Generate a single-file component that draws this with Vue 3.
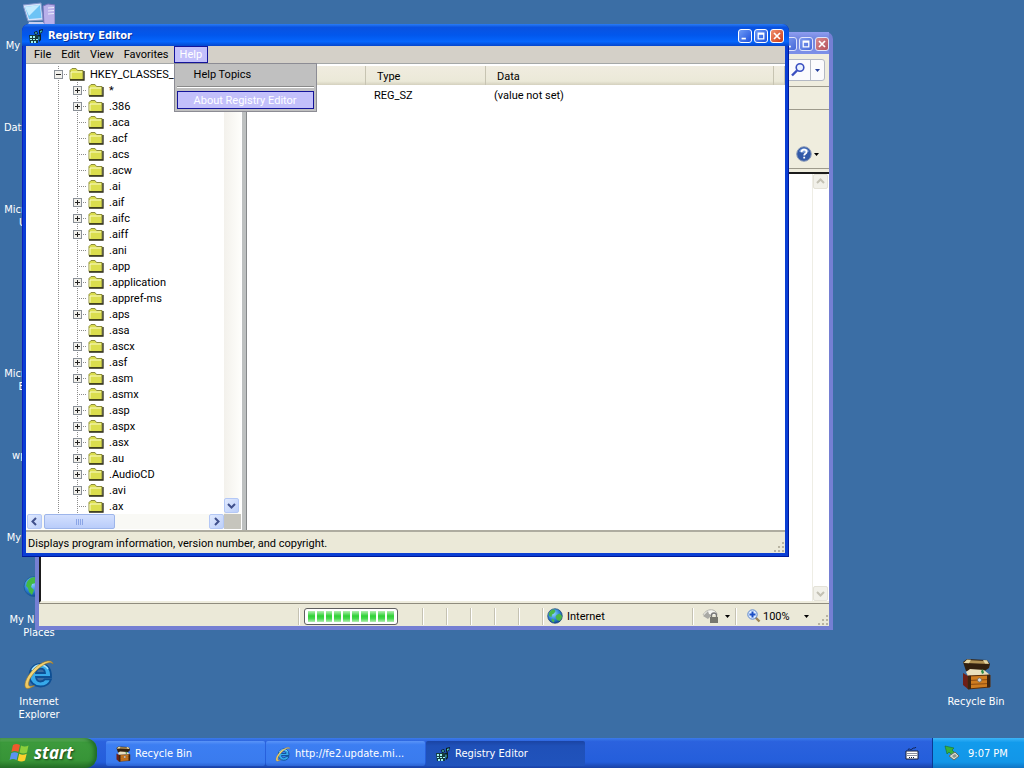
<template>
  <div class="screen">
    <svg class="sprite" aria-hidden="true">
      <defs>
        <linearGradient id="gold" x1="0" y1="0" x2="1" y2="1">
          <stop offset="0" stop-color="#fff3a8" />
          <stop offset="1" stop-color="#d99a1c" />
        </linearGradient>
        <radialGradient id="sea" cx="0.4" cy="0.35" r="0.7">
          <stop offset="0" stop-color="#8fd4ff" />
          <stop offset="0.6" stop-color="#2a7fd4" />
          <stop offset="1" stop-color="#0b3f86" />
        </radialGradient>
      </defs>
      <symbol id="i-folder" viewBox="0 0 16 16">
        <path d="M1 4.500L3 2.500h4l1.500 2H14v9H1z" fill="#dbde4e" stroke="#8c8c3c" />
        <path d="M2 12.500V6h11" fill="none" stroke="#fbfbc8" />
        <path d="M1 14h14V5" fill="none" stroke="#2a2a14" stroke-width="1.300" />
      </symbol>
      <symbol id="i-ie" viewBox="0 0 32 32">
        <path d="M28 19H13c.3 3 2 4.500 4.500 4.500 2 0 3.500-.8 4.300-2.200H28C26.500 26 22.500 28.500 17.500 28.500 11 28.500 6.500 24 6.500 17.500S11 6 17.500 6 28.300 10.500 28 19zM13 15h9c-.2-2.800-1.800-4.300-4.400-4.300S13.300 12.200 13 15z" fill="#37a9ea" stroke="#0e4f94" stroke-width="1.800" />
        <path d="M9 12c2-3.500 5-5 8.500-5 3 0 6 1.500 7.500 4" fill="none" stroke="#a5e4ff" stroke-width="1.600" />
        <path d="M30 6C29 .5 20 3 12.500 9.500 4 17 .5 26 2.500 29.500c1.500 2 5.500.5 9-2-4 1.500-6 1-6-1.500 0-4 4-10 9-14.500C21 5.800 27.500 2.500 30 6z" fill="url(#gold)" stroke="#a8791a" stroke-width="0.600" />
      </symbol>
      <symbol id="i-globe" viewBox="0 0 16 16">
        <circle cx="8" cy="8" r="7.300" fill="url(#sea)" stroke="#1b4370" stroke-width="0.700" />
        <path d="M2 5c1-2 3-3.500 5-3.800L8.500 3 7 5.500 5 6.500 4.500 9 2 8zM9.500 7l3-1.500L15 8c0 2-1 4-2.500 5L10 12 8.500 9zM5 10.500L7.500 12 7 14.500 4.500 13z" fill="#4ab648" />
      </symbol>
      <symbol id="i-network" viewBox="0 0 32 32">
        <circle cx="11" cy="10.500" r="10" fill="url(#sea)" stroke="#1b5a90" stroke-width="0.700" />
        <path d="M4 6c2-3 4-4.500 8-5l3 3-2 3-4 1-1 3 3 3-2 5-3-3-1-4-2-2zM14 9l5-2 2 4-3 6-3-2z" fill="#43b944" />
        <path d="M15 14h13v11H15z" fill="#7cc8f4" stroke="#6f88b8" stroke-width="2" />
      </symbol>
      <symbol id="i-regedit" viewBox="0 0 16 16">
        <path d="M1 7h9v8H2z" fill="#163b3d" />
        <path d="M2 8h2v2H2zM5 8h2v2H5zM2 11h2v1H2zM5 11h2v1H5zM8 11h2v1H8zM3 13h2v2H3zM6 13h2v2H6z" fill="#9ff0ee" />
        <path d="M6 4l3-1 1 3-3 1zM11 2l4-1-1 4-3 1zM10 7l3-1v6l-2 2z" fill="#0b1c20" />
        <path d="M7 4.500l1.500-.5.5 1.500L7.500 6zM12 3l2-.8-.4 2-1.600.6z" fill="#4cc7c5" />
        <path d="M10.500 8.500h1v3h-1z" fill="#4cc7c5" />
      </symbol>
      <symbol id="i-chest" viewBox="0 0 32 32">
        <path d="M3 4l4-3 20 1 3 4-1 4-6 4-17-1z" fill="#32200f" />
        <path d="M3 5l4-3 19 1 3 3-23-1z" fill="#b09155" />
        <path d="M7 1.500l4 .2-2 3.500-5-.2zM23 2l4 .3 2 3.500-4-.2z" fill="#e5d7a6" />
        <path d="M6 14l4-3 14 1 6 5-22 1z" fill="#eadfbd" />
        <path d="M21 13l2-2 1 4-2 1z" fill="#2f8b46" />
        <path d="M3 15l5 3v13l-5-4z" fill="#6e1f18" />
        <path d="M8 18l22-1v12L8 31z" fill="#cf7c20" stroke="#5a2d0a" />
        <path d="M8 22.500l22-1M8 26.500l22-1" stroke="#8e4c12" fill="none" />
        <path d="M8 18l3-.2V31l-3 .2zM27 17l3-.2V29l-3 .3z" fill="#3e2410" />
        <circle cx="19.500" cy="22" r="2" fill="#d9d9d9" stroke="#5b5b5b" stroke-width="0.600" />
      </symbol>
      <symbol id="i-computer" viewBox="0 0 32 32">
        <path d="M0 3l18-2 2 17-15 1z" fill="#d5e4fb" stroke="#7e93c9" />
        <path d="M2 5l15-2 1.500 13L6 17z" fill="#6cc3f5" />
        <path d="M2 5l15-2L6 14z" fill="#c4ecff" />
        <path d="M20 4l5-2 7 1v20l-7 2-4-2z" fill="#b9b0ea" stroke="#7672ba" />
        <path d="M25 6l6-.5M25 9l6-.5M25 12l6-.5" stroke="#ececff" />
        <path d="M6 20h14l3 5H4z" fill="#c9cff0" />
      </symbol>
      <symbol id="i-flag" viewBox="0 0 24 22">
        <path d="M5 3c2.500-1.500 4.500-1.300 7 0l-1.600 7c-2.500-1.200-4.700-1.300-7 0z" fill="#ee5a2c" />
        <path d="M13 3.500c2.500 1.300 5 1.200 7.500 0L19 10.500c-2.500 1.300-5 1.200-7.500 0z" fill="#8bcf3c" />
        <path d="M3.200 11.300c2.300-1.300 4.500-1.200 7 0L8.600 18c-2.500-1.200-4.700-1.300-7 0z" fill="#5a93f2" />
        <path d="M11.200 11.800c2.500 1.300 5 1.200 7.500 0L17 18.500c-2.500 1.300-5 1.200-7.400 0z" fill="#fbd02d" />
      </symbol>
      <symbol id="i-left" viewBox="0 0 9 9"><path d="M6 1L2.500 4.500 6 8" fill="none" stroke="currentColor" stroke-width="2" /></symbol>
      <symbol id="i-right" viewBox="0 0 9 9"><path d="M3 1l3.500 3.500L3 8" fill="none" stroke="currentColor" stroke-width="2" /></symbol>
      <symbol id="i-up" viewBox="0 0 9 9"><path d="M1 6l3.500-3.500L8 6" fill="none" stroke="currentColor" stroke-width="2" /></symbol>
      <symbol id="i-down" viewBox="0 0 9 9"><path d="M1 3l3.500 3.500L8 3" fill="none" stroke="currentColor" stroke-width="2" /></symbol>
      <symbol id="i-drop" viewBox="0 0 5 3"><path d="M0 0h5L2.500 3z" fill="currentColor" /></symbol>
      <symbol id="i-grip" viewBox="0 0 12 12">
        <path d="M9 1h2v2H9zM5 5h2v2H5zM9 5h2v2H9zM1 9h2v2H1zM5 9h2v2H5zM9 9h2v2H9z" fill="#b8b4a2" />
      </symbol>
      <symbol id="i-min" viewBox="0 0 14 14"><path d="M3 9h5v2H3z" fill="#fff" /></symbol>
      <symbol id="i-max" viewBox="0 0 14 14"><path d="M3 3h8v8H3zM4.500 5.500v4h5v-4z" fill="#fff" fill-rule="evenodd" /></symbol>
      <symbol id="i-close" viewBox="0 0 14 14"><path d="M3.500 3.500l7 7M10.500 3.500l-7 7" stroke="#fff" stroke-width="2" /></symbol>
    </svg>

    <main class="desktop">
      <ul class="shortcuts">
        <li v-for="s in shortcuts" :key="s.label" class="shortcut">
          <svg class="icon32"><use v-if="s.icon" :href="s.icon" /></svg>
          <span>{{ s.label }}</span>
        </li>
      </ul>
      <ul class="shortcuts right">
        <li class="shortcut">
          <svg class="icon32"><use href="#i-chest" /></svg>
          <span>Recycle Bin</span>
        </li>
      </ul>

      <section class="window browser" aria-label="Browser">
        <header class="titlebar">
          <button v-for="b in winButtons" :key="b" class="winbtn" :class="b" :aria-label="b">
            <svg><use :href="'#i-' + b" /></svg>
          </button>
        </header>
        <div class="address-row">
          <div class="search">
            <button aria-label="Search">
              <svg width="16" height="16" viewBox="0 0 16 16" fill="none">
                <circle cx="10" cy="5.500" r="3.800" fill="#eaf2ff" stroke="#3a4fc0" stroke-width="1.600" />
                <path d="M7 8.500L2 13.500" stroke="#3a4fc0" stroke-width="2.400" />
              </svg>
            </button>
            <button aria-label="Search options"><svg class="drop"><use href="#i-drop" /></svg></button>
          </div>
        </div>
        <div class="links-row"></div>
        <div class="tools-row">
          <button class="help" aria-label="Help">
            <svg width="16" height="16" viewBox="0 0 16 16">
              <circle cx="8" cy="8" r="7.300" fill="#3159a8" stroke="#8d9cb8" />
              <path d="M3 5.500a5.500 5.500 0 0 1 10 0c-3 1.500-7 1.500-10 0z" fill="#7ba0dc" />
              <path d="M5.500 6.300C5.500 4.500 6.600 3.700 8 3.700s2.600.8 2.600 2.200c0 1.700-2.400 1.700-2.400 3.600M8.200 10.800v1.700" fill="none" stroke="#fff" stroke-width="1.800" />
            </svg>
            <svg class="drop"><use href="#i-drop" /></svg>
          </button>
        </div>
        <div class="page">
          <div class="vscroll off">
            <button aria-label="Scroll up"><svg><use href="#i-up" /></svg></button>
            <button aria-label="Scroll down"><svg><use href="#i-down" /></svg></button>
          </div>
        </div>
        <footer class="status">
          <span class="cell fill"></span>
          <span class="cell loading">
            <span class="progress" role="progressbar" aria-label="Loading"><i v-for="n in 10" :key="n"></i></span>
          </span>
          <span v-for="n in 5" :key="n" class="cell slot"></span>
          <span class="cell zone"><svg class="icon16"><use href="#i-globe" /></svg>Internet</span>
          <button class="cell filter" aria-label="Protection">
            <svg width="18" height="16" viewBox="0 0 18 16">
              <path d="M1 7c2-4 6-6 10-5 3 1 4 3 4 5" fill="#f6f6f2" stroke="#b6b6ae" />
              <path d="M1 8l5-5 1 3 3 1-4 4z" fill="#a9a9a4" />
              <path d="M9.500 9V7.500a2.500 2.500 0 0 1 5 0V9" fill="none" stroke="#777" stroke-width="1.300" />
              <path d="M8 9h8v6H8z" fill="#77776f" />
            </svg>
            <svg class="drop"><use href="#i-drop" /></svg>
          </button>
          <button class="cell zoom">
            <svg width="14" height="14" viewBox="0 0 14 14">
              <path d="M8.500 8.500l4 4" stroke="#9c8457" stroke-width="2.400" />
              <circle cx="5.500" cy="5.500" r="4.700" fill="#dcebff" stroke="#5c86cc" />
              <path d="M5.500 2.500v6M2.500 5.500h6" stroke="#1c4fc4" stroke-width="2" />
            </svg>
            <span>100%</span>
            <svg class="drop"><use href="#i-drop" /></svg>
          </button>
          <svg class="grip"><use href="#i-grip" /></svg>
        </footer>
      </section>

      <section class="window registry" aria-label="Registry Editor">
        <header class="titlebar">
          <svg class="icon16"><use href="#i-regedit" /></svg>
          <h1>Registry Editor</h1>
          <button v-for="b in winButtons" :key="b" class="winbtn" :class="b" :aria-label="b">
            <svg><use :href="'#i-' + b" /></svg>
          </button>
        </header>
        <nav class="menubar">
          <button v-for="m in menus" :key="m">{{ m }}</button>
          <div class="menu">
            <button class="open">Help</button>
            <div class="popup">
              <button>Help Topics</button>
              <hr>
              <button class="active">About Registry Editor</button>
            </div>
          </div>
        </nav>
        <div class="panes">
          <div class="tree-pane">
            <div class="tree-body">
              <ul class="tree">
                <li>
                  <div class="node">
                    <span class="twig"><i class="box"></i></span>
                    <svg class="icon16"><use href="#i-folder" /></svg>
                    <span>HKEY_CLASSES_ROOT</span>
                  </div>
                  <ul class="branch">
                    <li v-for="k in keys" :key="k.name" class="node">
                      <span class="twig"><i v-if="k.more" class="box plus"></i></span>
                      <svg class="icon16"><use href="#i-folder" /></svg>
                      <span>{{ k.name }}</span>
                    </li>
                  </ul>
                </li>
              </ul>
              <div class="vscroll">
                <button aria-label="Scroll down"><svg><use href="#i-down" /></svg></button>
              </div>
            </div>
            <div class="hscroll">
              <button aria-label="Scroll left"><svg><use href="#i-left" /></svg></button>
              <span class="thumb"><i v-for="n in 4" :key="n"></i></span>
              <button class="end" aria-label="Scroll right"><svg><use href="#i-right" /></svg></button>
              <span class="corner"></span>
            </div>
          </div>
          <div class="values">
            <table>
              <thead>
                <tr><th class="c-name">Name</th><th class="c-type">Type</th><th>Data</th><th class="c-rest"></th></tr>
              </thead>
              <tbody>
                <tr><td>(Default)</td><td>REG_SZ</td><td>(value not set)</td><td></td></tr>
              </tbody>
            </table>
          </div>
        </div>
        <footer class="status">
          <span class="fill">Displays program information, version number, and copyright.</span>
          <svg class="grip"><use href="#i-grip" /></svg>
        </footer>
      </section>
    </main>

    <footer class="taskbar">
      <button class="start"><svg><use href="#i-flag" /></svg>start</button>
      <div class="tasks">
        <button v-for="t in tasks" :key="t.title" :class="{ pressed: t.active }">
          <svg class="icon16"><use :href="t.icon" /></svg>
          <span>{{ t.title }}</span>
        </button>
      </div>
      <svg class="keyboard" width="14" height="14" viewBox="0 0 14 14">
        <path d="M3 4c1-3 2 1 4-1s3 0 4-2" fill="none" stroke="#10204c" />
        <path d="M1 5h12v8H1z" fill="#fff" stroke="#16203e" />
        <path d="M2.500 7.500h9M2.500 9.500h9M4 11.500h6" stroke="#16203e" stroke-dasharray="1 1" />
      </svg>
      <div class="tray">
        <svg width="16" height="16" viewBox="0 0 16 16">
          <path d="M1 1l9 2-2 2 3 3-3 2-3-3-2 2z" fill="#37b13c" stroke="#1c6f2c" stroke-width="0.600" />
          <path d="M5 11l6-4 4 4-5 4z" fill="#d6dccf" stroke="#5f6b62" />
          <path d="M8 11l3-2 2 2-3 2z" fill="#8a948c" />
        </svg>
        <time>9:07 PM</time>
      </div>
    </footer>
  </div>
</template>

<script setup>
const winButtons = ['min', 'max', 'close']
const menus = ['File', 'Edit', 'View', 'Favorites']

const shortcuts = [
  { label: 'My Computer', icon: '#i-computer' },
  { label: 'Data Manager' },
  { label: 'Microsoft Web Updater' },
  { label: '' },
  { label: 'Microsoft Web Explorer' },
  { label: 'wpsettings' },
  { label: 'My Programs' },
  { label: 'My Network Places', icon: '#i-network' },
  { label: 'Internet Explorer', icon: '#i-ie' },
]

const expandable = ['*', '.386', '.aif', '.aifc', '.aiff', '.application', '.aps', '.ascx', '.asf', '.asm', '.asp', '.aspx', '.asx', '.au', '.AudioCD', '.avi']
const keys = [
  '*', '.386', '.aca', '.acf', '.acs', '.acw', '.ai', '.aif', '.aifc', '.aiff', '.ani', '.app',
  '.application', '.appref-ms', '.aps', '.asa', '.ascx', '.asf', '.asm', '.asmx', '.asp', '.aspx',
  '.asx', '.au', '.AudioCD', '.avi', '.ax',
].map((name) => ({ name, more: expandable.includes(name) }))

const tasks = [
  { title: 'Recycle Bin', icon: '#i-chest' },
  { title: 'http://fe2.update.mi...', icon: '#i-ie' },
  { title: 'Registry Editor', icon: '#i-regedit', active: true },
]
</script>

<style>
body { margin: 0; overflow: hidden; }
</style>

<style scoped>
.screen {
  display: flex;
  flex-direction: column;
  height: 100vh;
  font: 11px/13px Roboto, "Liberation Sans", Arial, sans-serif;
  color: #000;
}
.screen * { box-sizing: border-box; }
.sprite { position: absolute; width: 0; height: 0; }
button { font: inherit; color: inherit; padding: 0; margin: 0; border: 0; background: none; }
ul { list-style: none; margin: 0; padding: 0; }
svg { flex-shrink: 0; display: block; }
.icon16 { width: 16px; height: 16px; }
.icon32 { width: 32px; height: 32px; }
.drop { width: 5px; height: 3px; }
.grip { width: 12px; height: 12px; align-self: flex-end; }

/* desktop */
.desktop {
  position: relative;
  flex: 1;
  min-height: 0;
  display: flex;
  justify-content: space-between;
  background: #3b6ea5;
}
.shortcuts { width: 78px; padding-top: 2px; display: grid; grid-template-rows: repeat(9, 82px); }
.shortcuts.right { width: 96px; }
.shortcuts.right .shortcut { grid-row: 9; }
.shortcut {
  display: flex;
  flex-direction: column;
  align-items: center;
  gap: 5px;
  color: #fff;
  text-align: center;
  font-family: "DejaVu Sans Condensed", "Noto Sans", sans-serif;
}
.shortcut span { max-width: 76px; }

/* windows */
.window { position: absolute; display: flex; flex-direction: column; }
.titlebar { display: flex; align-items: center; justify-content: flex-end; gap: 2px; flex-shrink: 0; }
.winbtn {
  width: 14px;
  height: 14px;
  border: 1px solid #fff;
  border-radius: 3px;
  background: linear-gradient(135deg, #6f9bf5, #1c50dc);
}
.winbtn svg { width: 12px; height: 12px; }
.winbtn.close { background: linear-gradient(135deg, #f0906f, #cc3a14); }
.status { display: flex; align-items: center; background: #ebe9d8; flex-shrink: 0; }
.fill { flex: 1; min-width: 0; }

.browser {
  left: 35px;
  top: 32px;
  right: 191px;
  bottom: 108px;
  padding: 0 4px 4px;
  border-radius: 7px 7px 0 0;
  background: #757fd3;
}
.browser .titlebar {
  height: 22px;
  padding-top: 2px;
  background: linear-gradient(#8f9df0, #7186e0 30%, #7c90e8);
}
.browser .winbtn { background: linear-gradient(135deg, #7f9cf0, #4668d8); border-color: #dfe4fb; }
.browser .winbtn.close { background: linear-gradient(135deg, #d98a8e, #b5535c); }
.address-row, .links-row, .tools-row {
  display: flex;
  align-items: center;
  justify-content: flex-end;
  background: #efedde;
  flex-shrink: 0;
}
.address-row { height: 33px; padding-right: 4px; border-bottom: 1px solid #9d9a8c; }
.links-row { height: 23px; border-bottom: 1px solid #9d9a8c; }
.tools-row { height: 59px; padding-right: 10px; align-items: flex-end; border-bottom: 1px solid #9d9a8c; }
.search { display: flex; height: 22px; border: 1px solid #b4b9c4; border-radius: 3px; background: #fbfbfd; color: #26409c; }
.search button { display: flex; align-items: center; padding: 0 4px; }
.search button + button { border-left: 1px solid #b4b9c4; }
.help { display: flex; align-items: center; gap: 2px; padding-bottom: 6px; }
.page {
  flex: 1;
  min-height: 0;
  display: flex;
  justify-content: flex-end;
  margin-top: 3px;
  border-top: 2px solid #1b1b1b;
  border-left: 2px solid #1b1b1b;
  border-bottom: 2px solid #efedde;
  background: #fff;
  box-shadow: 0 -3px #efedde;
}
.browser .status { height: 23px; padding-top: 2px; border-top: 1px solid #8f8c7e; }
.cell { display: flex; align-items: center; height: 17px; border-right: 1px solid #c5c2b2; box-shadow: 1px 0 #fff; }
.loading { width: 124px; padding-left: 5px; }
.progress { display: flex; gap: 2px; padding: 2px 3px; width: 94px; height: 17px; border: 1px solid #5f5f5f; border-radius: 3px; background: #fff; }
.progress i { flex: 1; background: linear-gradient(#b5f0b3, #2fd136 45%, #4ad94f 70%, #b5f0b3); }
.slot { width: 24px; }
.zone { width: 150px; gap: 4px; padding-left: 4px; }
.filter { width: 43px; gap: 5px; padding-left: 9px; }
.zoom { width: 73px; gap: 2px; padding-left: 11px; border-right: 0; box-shadow: none; }
.zoom .drop { margin-left: auto; }
.browser .grip { margin-left: 8px; }

/* scroll bars */
.vscroll { width: 17px; display: flex; flex-direction: column; justify-content: flex-end; background: linear-gradient(90deg, #f3f1ec, #fefefb); }
.vscroll button, .hscroll button {
  display: grid;
  place-items: center;
  width: 15px;
  height: 15px;
  border: 1px solid #b4c8f6;
  border-radius: 2px;
  background: linear-gradient(135deg, #e1eafe, #bccffa);
  color: #40508c;
}
.tree-body .vscroll { padding-bottom: 1px; }
.vscroll svg, .hscroll svg { width: 9px; height: 9px; }
.vscroll.off { justify-content: space-between; border-left: 1px solid #eeede5; background: #fff; }
.vscroll.off button { border-color: #e4e2d8; background: #f1f0e9; color: #c3c1b4; }
.hscroll { display: flex; height: 15px; background: #f9f9f5; flex-shrink: 0; }
.thumb {
  display: flex;
  align-items: center;
  justify-content: center;
  gap: 1px;
  width: 71px;
  margin-left: 2px;
  border: 1px solid #9db5ea;
  border-radius: 2px;
  background: linear-gradient(#d3e0fe, #b9ccfa);
}
.thumb i { width: 1px; height: 6px; background: #8ba5e6; }
.hscroll .end { margin-left: auto; }
.corner { width: 17px; background: #c6c5bd; }

/* registry editor */
.registry {
  left: 22px;
  top: 24px;
  right: 235px;
  bottom: 181px;
  padding: 0 4px 4px;
  border-radius: 7px 7px 0 0;
  background: #0a3ed4;
  box-shadow: inset -1px -1px #00199a, inset 1px 0 #0a1fc0;
}
.registry .titlebar {
  height: 22px;
  margin: 0 -4px;
  padding: 1px 5px 0 6px;
  border-radius: 7px 7px 0 0;
  background: linear-gradient(#2a7cf4, #0a52e0 15%, #0257ec 50%, #0566fd 80%, #0445cc);
}
h1 {
  flex: 1;
  margin: 0 0 0 2px;
  color: #fff;
  font: bold 11px/13px "DejaVu Sans Condensed", "Noto Sans", sans-serif;
  text-shadow: 1px 1px #0a2f94;
}
.menubar { display: flex; height: 18px; padding-left: 3px; background: #d4d0c8; border-bottom: 1px solid #a5a8a8; flex-shrink: 0; }
.menubar > button { padding: 0 5px; }
.menu { position: relative; }
.open { height: 17px; padding: 0 5px; border: 1px solid #14149a; background: #c3c0fb; color: #fff; }
.popup {
  position: absolute;
  z-index: 2;
  top: 17px;
  left: 0;
  width: 143px;
  padding: 1px 2px 2px;
  border: 1px solid #8c8c94;
  background: #c0c0c0;
}
.popup button { display: block; width: 100%; height: 18px; padding-left: 16px; border: 1px solid transparent; text-align: left; white-space: nowrap; }
.popup .active { border-color: #14149a; background: #c3c0fb; color: #fff; }
.popup hr { height: 2px; margin: 3px 0; border: 0; border-top: 1px solid #8a8a8a; background: #fff; }
.panes { flex: 1; min-height: 0; display: flex; padding-top: 2px; background: #fff; }
.tree-pane { display: flex; flex-direction: column; width: 216px; flex-shrink: 0; padding: 0 1px 1px; }
.tree-body { flex: 1; min-height: 0; display: flex; }
.tree { flex: 1; min-width: 0; overflow: hidden; padding-left: 22px; }
.tree > li, .branch { background: repeating-linear-gradient(#8c8c8c 0 1px, transparent 1px 2px) 9px 0 / 1px 100% no-repeat; }
.branch { padding-left: 19px; }
.node { display: flex; align-items: center; height: 16px; white-space: nowrap; }
.branch .node { background: repeating-linear-gradient(#8c8c8c 0 1px, transparent 1px 2px) 9px 0 / 1px 100% no-repeat; }
.node .icon16 { margin: 0 5px 0 1px; }
.twig {
  display: flex;
  justify-content: center;
  align-items: center;
  width: 19px;
  height: 16px;
  background: repeating-linear-gradient(90deg, #8c8c8c 0 1px, transparent 1px 2px) 9px 8px / 10px 1px no-repeat;
}
.box {
  width: 9px;
  height: 9px;
  border: 1px solid #8a9097;
  background: linear-gradient(#222, #222) 1px 3px / 5px 1px no-repeat, #f2f1ec;
}
.plus { background: linear-gradient(#222, #222) 1px 3px / 5px 1px no-repeat, linear-gradient(#222, #222) 3px 1px / 1px 5px no-repeat, #f2f1ec; }
.values { flex: 1; min-width: 0; border-left: 4px solid #bdc0c0; box-shadow: inset 1px 0 #85888a; }
table { width: 100%; table-layout: fixed; border-collapse: separate; border-spacing: 0; }
th {
  height: 19px;
  padding: 1px 0 0 11px;
  background: linear-gradient(#f0ece0, #ebe9d8 80%, #d4d0be);
  box-shadow: inset -1px 0 #c7c4b2;
  font-weight: normal;
  text-align: left;
}
td { height: 20px; padding: 0 0 0 8px; }
.c-name, .c-type { width: 120px; }
.c-rest { width: 11px; }
.registry .status { height: 23px; padding: 2px 0 0 2px; border-top: 2px solid #aeaca0; }

/* taskbar */
.taskbar {
  display: flex;
  align-items: stretch;
  height: 30px;
  flex-shrink: 0;
  background: linear-gradient(#3b7bea, #2b62de 12%, #245edb 80%, #1941a5);
  color: #fff;
  font-family: "DejaVu Sans Condensed", "Noto Sans", sans-serif;
}
.start {
  display: flex;
  align-items: center;
  width: 97px;
  padding-left: 8px;
  gap: 2px;
  border-radius: 0 12px 12px 0;
  background: linear-gradient(#6cb56a, #3c9a3c 15%, #379437 75%, #277227);
  box-shadow: inset -3px 0 4px #1f6a26;
  font: italic bold 17px/26px "Open Sans", "Noto Sans", sans-serif;
  text-shadow: 1px 1px 2px #173f17;
}
.start svg { width: 24px; height: 22px; }
.tasks { flex: 1; min-width: 0; display: flex; gap: 1px; padding: 3px 0 2px 9px; }
.tasks button {
  display: flex;
  align-items: center;
  gap: 4px;
  flex: 0 1 159px;
  min-width: 0;
  padding-left: 9px;
  border-radius: 2px;
  background: linear-gradient(#5a94f8, #3c7ef2 15%, #3a7bee 85%, #2c64d4);
  white-space: nowrap;
}
.tasks .pressed { background: linear-gradient(#1a44a4, #1f50b8 20%, #2053bc); }
.keyboard { align-self: center; margin-right: 13px; }
.tray {
  display: flex;
  align-items: center;
  gap: 8px;
  width: 92px;
  padding-left: 11px;
  border-left: 1px solid #0b3a94;
  background: linear-gradient(#3cb4f8, #129bec 15%, #1296e8 80%, #0f74c4);
}
</style>
